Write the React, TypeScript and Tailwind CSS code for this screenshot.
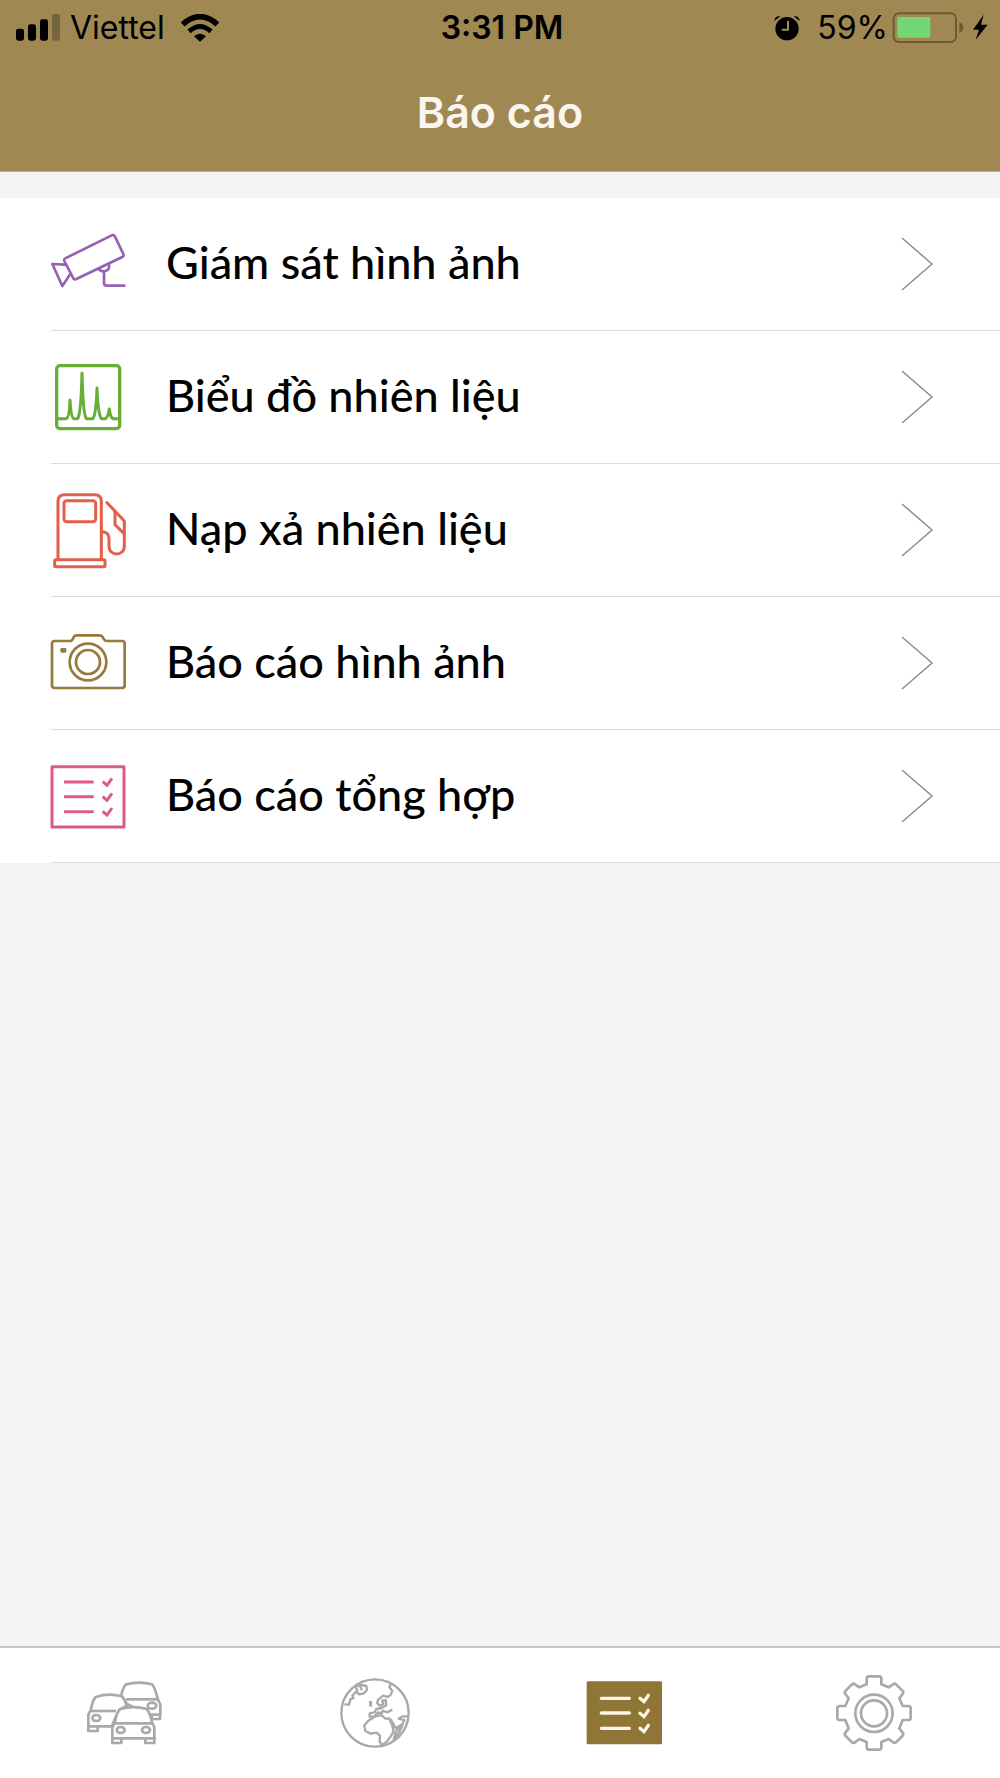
import type { ReactNode } from 'react'

function SignalIcon() {
  return (
    <svg width="46" height="28" viewBox="0 0 138 84" aria-hidden="true">
      <rect x="0" y="44" width="24" height="36" rx="7" />
      <rect x="36" y="31" width="24" height="49" rx="7" />
      <rect x="72" y="16" width="24" height="64" rx="7" />
      <rect x="108" y="0" width="24" height="80" rx="7" opacity="0.25" />
    </svg>
  )
}

function WifiIcon() {
  return (
    <svg width="38" height="28" viewBox="547 37 114 84" fill="none" stroke="currentColor" aria-hidden="true">
      <path d="M552 68Q604 22 656 68" strokeWidth="17" />
      <path d="M571 89Q604 60 637 89" strokeWidth="15" />
      <path d="M586 104Q604 88 622 104L604 120Z" fill="currentColor" stroke="none" />
    </svg>
  )
}

function AlarmIcon() {
  return (
    <svg width="28" height="28" viewBox="100 38 84 84" aria-hidden="true">
      <circle cx="142" cy="82" r="35" fill="currentColor" />
      <path d="M104 59Q105 43 122 45ZM180 59Q179 43 162 45Z" fill="currentColor" />
      <path d="M145 58V85H126" fill="none" stroke="#9f8852" strokeWidth="6" />
    </svg>
  )
}

function BatteryIcon() {
  return (
    <svg width="72" height="32" viewBox="458 35 216 96" aria-hidden="true">
      <rect x="463" y="39" width="187" height="86" rx="16" fill="none" stroke="#6d5a32" strokeWidth="6" />
      <rect x="474" y="50" width="99" height="62" rx="5" fill="#73d874" />
      <path d="M660 66Q672 72 672 82T660 98Z" fill="#6d5a32" />
    </svg>
  )
}

function BoltIcon() {
  return (
    <svg width="16" height="28" viewBox="693 40 48 84" aria-hidden="true">
      <path d="M728 42L696 87H714L704 117L740 72H720Z" fill="currentColor" />
    </svg>
  )
}

function CctvIcon() {
  return (
    <svg className="size-20" viewBox="54 42 240 240" fill="none" stroke="#9461b3" strokeWidth="8" strokeLinejoin="round" strokeLinecap="round" aria-hidden="true">
      <path d="M106 145L245 76Q252 73 255 80L280 132Q283 138 277 141L139 207Q132 210 129 203L103 153Q101 148 106 145Z" />
      <path d="M105 164L67 162L97 228L121 192" />
      <path d="M206 176Q210 184 222 184Q240 182 237 163" />
      <path d="M222 184V219Q222 227 230 227H283" />
    </svg>
  )
}

function FuelChartIcon() {
  return (
    <svg className="size-20" viewBox="54 51 240 240" fill="none" stroke="#67ad36" strokeWidth="10" strokeLinejoin="round" strokeLinecap="round" aria-hidden="true">
      <rect x="80" y="77" width="189" height="189" rx="10" />
      <path d="M82 236H109Q118 232 120 180Q123 232 131 236H143Q153 222 156 99Q159 222 169 236H189Q198 222 201 144Q204 222 214 236H226Q234 232 238 207Q241 232 249 236H267" strokeWidth="9" />
    </svg>
  )
}

function FuelPumpIcon() {
  return (
    <svg className="size-20" viewBox="54 60 240 240" fill="none" stroke="#e0604b" strokeWidth="9" strokeLinejoin="round" strokeLinecap="round" aria-hidden="true">
      <path d="M84 268V94Q84 74 104 74H194Q214 74 214 94V268" />
      <rect x="102" y="92" width="95" height="63" rx="8" />
      <rect x="74" y="269" width="151" height="21" rx="3" />
      <path d="M217 185C231 186 237 194 237 206V228C237 260 283 260 283 228V153L231 98" />
      <path d="M255 124V164L283 192" />
    </svg>
  )
}

function CameraIcon() {
  return (
    <svg className="size-20" viewBox="54 39 240 240" fill="none" stroke="#957a3c" strokeWidth="8" strokeLinejoin="round" aria-hidden="true">
      <path d="M74 93H119Q126 93 129 86L132 80Q134 76 140 76H209Q214 76 217 80L222 88Q225 93 231 93H276Q284 93 284 101V226Q284 234 276 234H74Q66 234 66 226V101Q66 93 74 93Z" />
      <circle cx="174" cy="156" r="55" />
      <circle cx="174" cy="156" r="36" />
      <rect x="91" y="114" width="18" height="14" rx="4" fill="#957a3c" stroke="none" />
    </svg>
  )
}

function SummaryIcon() {
  return (
    <svg className="size-20" viewBox="54 48 240 240" fill="none" stroke="#dc5b8c" strokeWidth="9" aria-hidden="true">
      <rect x="66" y="80" width="216" height="181" strokeLinejoin="round" />
      <path d="M102 126H191M102 170H191M102 215H191" />
      <path d="M218 125L231 136L246 115M218 170L231 181L246 160M218 214L231 225L246 204" />
    </svg>
  )
}

function CarsIcon() {
  return (
    <svg className="size-20" viewBox="45 98 240 240" fill="#fff" stroke="#a9a9a9" strokeWidth="8" strokeLinejoin="round" aria-hidden="true">
      <path d="M245 220V236H270V208" />
      <path d="M154 164Q160 139 168 132Q208 122 246 132Q254 139 264 178L271 192V218Q271 223 264 223H232L170 190Z" />
      <path d="M168 177H264" />
      <ellipse cx="246" cy="196" rx="13" ry="9" />
      <path d="M55 256V272H83V258" />
      <path d="M126 258H55V223L63 208Q67 180 77 170Q116 157 155 168Q164 176 170 196L150 208L134 236Z" />
      <path d="M63 212H138" />
      <ellipse cx="79" cy="233" rx="12" ry="9" />
      <path d="M127 290V308H154V294M226 294V308H253V290" />
      <path d="M127 294V261L135 246Q139 217 150 206Q190 195 230 206Q240 217 246 246L253 261V294Z" />
      <path d="M136 249H245" />
      <ellipse cx="152" cy="269" rx="12" ry="9" />
      <ellipse cx="228" cy="269" rx="12" ry="9" />
    </svg>
  )
}

function GlobeIcon() {
  return (
    <svg className="size-20" viewBox="45 98 240 240" fill="none" stroke="#a9a9a9" strokeWidth="7" strokeLinejoin="round" aria-hidden="true">
      <circle cx="165" cy="218" r="101" />
      <path d="M108 137L125 134L139 137L141 149L130 160L117 162L109 154L97 166L101 173L91 177L87 193L73 192" />
      <path d="M107 140L113 153M120 138L126 150" />
      <path d="M213 130L208 140L217 152L211 165L202 170L190 166L175 177L171 187L179 196L190 191L187 181L197 179L199 195L184 203L169 206L164 216L149 219V229L164 228L174 216L185 220L188 211L201 216L217 208" />
      <path d="M152 182V193M148 195H156" strokeWidth="9" />
      <path d="M184 224L164 229L145 241L133 255L136 272L152 280L170 277L180 286L179 303L186 315L201 303L212 288L221 273L216 253L207 234L196 235Z" />
      <path d="M212 236L227 264L247 252L253 239L236 235L248 228L264 228" />
      <path d="M248 253L238 276L221 298L227 276L244 255" />
    </svg>
  )
}

function ReportIcon() {
  return (
    <svg className="size-20" viewBox="45 98 240 240" fill="none" stroke="#fdf5e6" strokeWidth="10" strokeLinecap="round" aria-hidden="true">
      <rect x="50" y="123" width="226" height="189" rx="4" fill="#8f7637" stroke="none" />
      <path d="M94 174H178M94 218H178M94 264H178" />
      <path d="M210 174L222 184L235 165M210 219L222 229L235 210M210 264L222 274L235 255" />
    </svg>
  )
}

function GearIcon() {
  return (
    <svg className="size-20" viewBox="45 98 240 240" fill="none" stroke="#a9a9a9" strokeWidth="8" strokeLinejoin="round" aria-hidden="true">
      <path d="M140 132V115Q140 108 147 108H177Q184 108 184 115V132L206 141L219 132Q224 128 229 133L247 151Q252 156 248 161L238 174L248 197H265Q272 197 272 204V232Q272 239 265 239H248L238 264L248 277Q252 282 247 287L229 305Q224 310 219 306L206 296L184 305V321Q184 328 177 328H147Q140 328 140 321V305L118 296L105 306Q100 310 95 305L77 287Q72 282 76 277L86 264L76 239H59Q52 239 52 232V204Q52 197 59 197H76L86 174L76 161Q72 156 77 151L95 133Q100 128 105 132L118 141Z" />
      <circle cx="162" cy="219" r="56" />
      <circle cx="162" cy="219" r="39" />
    </svg>
  )
}

function Chevron() {
  return (
    <svg width="34" height="56" viewBox="0 0 34 56" fill="none" stroke="#8e8e8e" strokeWidth="1.5" aria-hidden="true">
      <path d="M2 2L32 28L2 54" />
    </svg>
  )
}

const reports: { label: string; icon: ReactNode }[] = [
  { label: 'Giám sát hình ảnh', icon: <CctvIcon /> },
  { label: 'Biểu đồ nhiên liệu', icon: <FuelChartIcon /> },
  { label: 'Nạp xả nhiên liệu', icon: <FuelPumpIcon /> },
  { label: 'Báo cáo hình ảnh', icon: <CameraIcon /> },
  { label: 'Báo cáo tổng hợp', icon: <SummaryIcon /> },
]

const tabs: { label: string; icon: ReactNode }[] = [
  { label: 'Xe', icon: <CarsIcon /> },
  { label: 'Bản đồ', icon: <GlobeIcon /> },
  { label: 'Báo cáo', icon: <ReportIcon /> },
  { label: 'Cài đặt', icon: <GearIcon /> },
]

export default function App() {
  return (
    <div className="min-h-screen flex flex-col bg-[#f3f3f3] font-['Inter',sans-serif]">
      <header className="bg-[#9f8852] border-b border-[#b5ab94]">
        <div className="grid grid-cols-3 items-center h-14 pl-4 pr-3 text-[32px] leading-9 text-black">
          <div className="flex items-center gap-2">
            <SignalIcon />
            <span>Viettel</span>
            <span className="ml-2">
              <WifiIcon />
            </span>
          </div>
          <span className="text-center font-semibold">3:31 PM</span>
          <div className="flex items-center justify-end gap-2">
            <span className="mr-2">
              <AlarmIcon />
            </span>
            <div className="flex items-center gap-1">
              <span>59%</span>
              <BatteryIcon />
            </div>
            <BoltIcon />
          </div>
        </div>
        <h1 className="h-[115px] pt-7 text-center text-[43px] leading-[56px] font-semibold text-[#faf6ef]">Báo cáo</h1>
      </header>

      <main className="flex-1 pt-[26px]">
        <ul className="bg-white">
          {reports.map((r) => (
            <li key={r.label}>
              <a href="#" className="flex items-center pl-12 text-black">
                {r.icon}
                <span className="flex-1 h-[132px] pb-1 flex items-center ml-[38px] font-['Lato',sans-serif] font-medium text-[45px] leading-[56px]">
                  {r.label}
                </span>
                <span className="mr-[66px]">
                  <Chevron />
                </span>
              </a>
              <div className="ml-[51px] h-px bg-[#dcdcdc]" />
            </li>
          ))}
        </ul>
      </main>

      <nav className="grid grid-cols-4 h-[132px] bg-white border-t-2 border-[#c4c4c4]">
        {tabs.map((t) => (
          <button key={t.label} type="button" aria-label={t.label} className="flex items-center justify-center">
            {t.icon}
          </button>
        ))}
      </nav>
    </div>
  )
}
